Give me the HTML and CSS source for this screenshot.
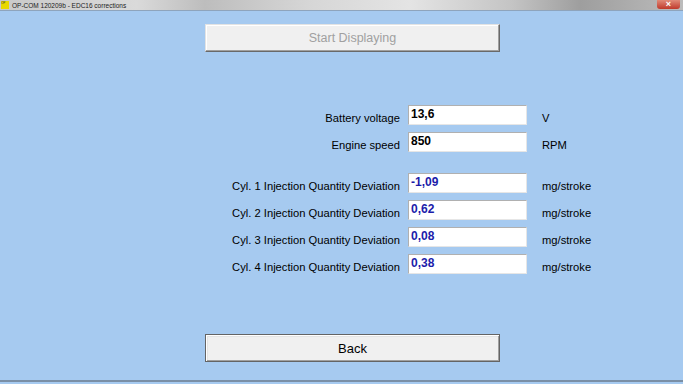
FILE: index.html
```html
<!DOCTYPE html>
<html lang="en">
<head>
  <meta charset="UTF-8" />
  <title>OP-COM 120209b - EDC16 corrections</title>
  <link rel="stylesheet" href="styles.css">
</head>
<body>
  <div class="titlebar">
    <span class="app-icon">OP</span>
    <span class="title">OP-COM 120209b - EDC16 corrections</span>
    <span class="close-btn">&#215;</span>
  </div>

  <div class="client">
    <button class="win-btn start-btn" disabled>Start Displaying</button>

    <div class="values">
      <label>Battery voltage</label>
      <div class="field">13,6</div>
      <span class="unit">V</span>

      <label>Engine speed</label>
      <div class="field">850</div>
      <span class="unit">RPM</span>

      <div class="spacer"></div>

      <label>Cyl. 1 Injection Quantity Deviation</label>
      <div class="field blue">-1,09</div>
      <span class="unit">mg/stroke</span>

      <label>Cyl. 2 Injection Quantity Deviation</label>
      <div class="field blue">0,62</div>
      <span class="unit">mg/stroke</span>

      <label>Cyl. 3 Injection Quantity Deviation</label>
      <div class="field blue">0,08</div>
      <span class="unit">mg/stroke</span>

      <label>Cyl. 4 Injection Quantity Deviation</label>
      <div class="field blue">0,38</div>
      <span class="unit">mg/stroke</span>
    </div>

    <button class="win-btn back-btn">Back</button>
  </div>
</body>
</html>
```

FILE: styles.css
```css
html, body {
  margin: 0;
  padding: 0;
  width: 683px;
  height: 384px;
  overflow: hidden;
  font-family: "Liberation Sans", Arial, sans-serif;
  background-color: #a6caf0;
}
.titlebar {
  height: 10px;
  display: flex;
  align-items: center;
  background: linear-gradient(90deg, #c9c9c9 0%, #dadada 20%, #bdbdbd 30%, #d6d6d6 45%, #e4e4e4 60%, #c4c4c4 75%, #9e9e9e 85%, #bcbcbc 100%);
  border-bottom: 1px solid #8ea4bc;
  position: relative;
}
.app-icon {
  width: 8px;
  height: 8px;
  margin-left: 1px;
  background-color: #e8d800;
  font-size: 3px;
  line-height: 4px;
  color: #333;
  overflow: hidden;
}
.title {
  margin-left: 3px;
  font-size: 6.5px;
  color: #222;
  white-space: nowrap;
}
.close-btn {
  position: absolute;
  right: 3px;
  top: 0;
  width: 23px;
  height: 9px;
  background: linear-gradient(#e08a78, #c0392b);
  border-radius: 0 0 3px 3px;
  color: #fff;
  font-size: 9px;
  line-height: 9px;
  text-align: center;
  font-weight: bold;
}
.client {
  height: 371px;
  border-bottom: 2px solid #7a8fa6;
  display: flex;
  flex-direction: column;
  box-sizing: border-box;
}
.win-btn {
  width: 295px;
  height: 28px;
  margin-left: 205px;
  padding: 0;
  background-color: #f0f0f0;
  border: 1px solid;
  border-color: #e3e3e3 #696969 #696969 #e3e3e3;
  box-shadow: inset -1px -1px 0 #a0a0a0, inset 1px 1px 0 #ffffff;
  font-family: "Liberation Sans", Arial, sans-serif;
  font-size: 13px;
  color: #000;
}
.start-btn {
  margin-top: 13px;
  color: #a0a0a0;
  font-size: 12.5px;
}
.back-btn {
  margin-top: 60px;
  border-color: #646464;
  box-shadow: inset 1px 1px 0 #ffffff, inset -1px -1px 0 #a0a0a0, inset 2px 2px 0 #e3e3e3;
}
.values {
  margin-top: 53px;
  display: grid;
  grid-template-columns: 400px 119px auto;
  column-gap: 8px;
  row-gap: 7px;
  align-items: end;
}
.values label {
  text-align: right;
  font-size: 11.2px;
  color: #000;
  padding-bottom: 1px;
}
.field {
  height: 20px;
  box-sizing: border-box;
  background: #fff;
  border: 1px solid;
  border-color: #b0b0b0 #e6e6e6 #e6e6e6 #b0b0b0;
  font-size: 12px;
  font-weight: bold;
  line-height: 14px;
  padding: 1px 0 0 2px;
  color: #000;
}
.field.blue {
  color: #1c1caa;
}
.unit {
  font-size: 11.2px;
  padding-left: 7px;
  padding-bottom: 1px;
}
.spacer {
  grid-column: 1 / 4;
  height: 7px;
}
```
